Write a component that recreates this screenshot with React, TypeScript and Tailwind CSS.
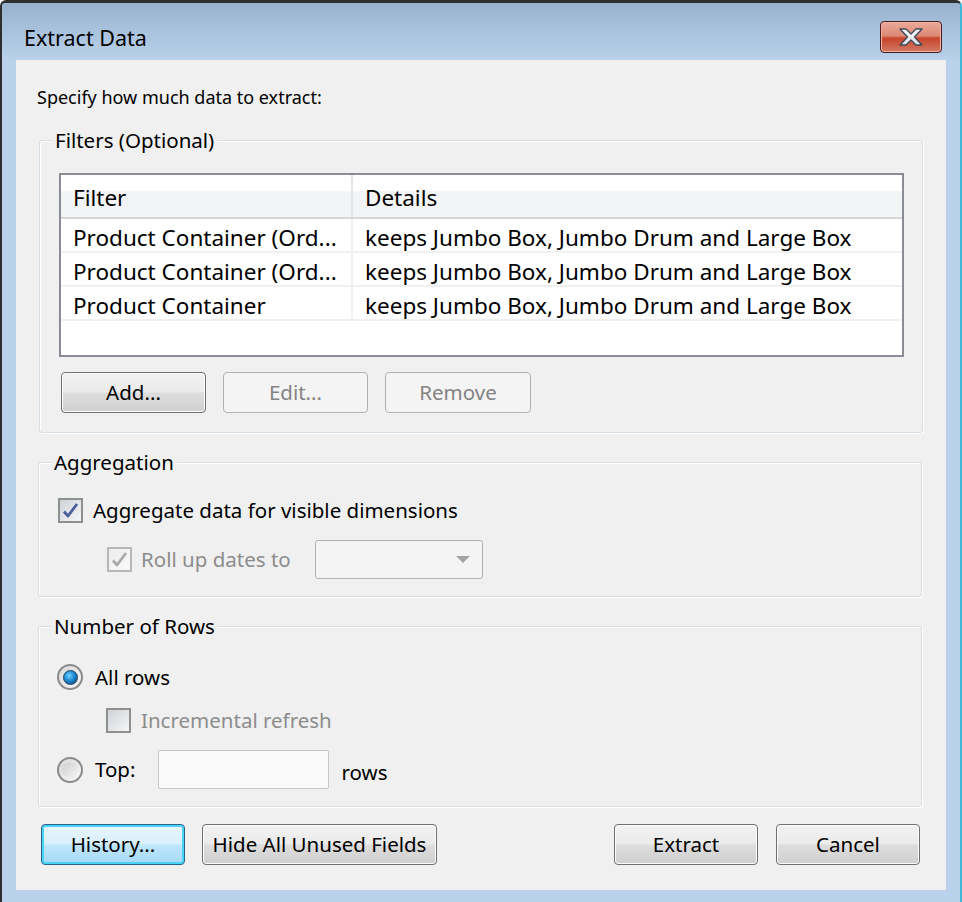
import React from 'react';

const font = { fontFamily: '"Noto Sans", "Open Sans", sans-serif' };

type BtnProps = {
  label: string;
  width: string;
  disabled?: boolean;
  focused?: boolean;
};

// Win7 style push button
const Button: React.FC<BtnProps> = ({ label, width, disabled, focused }) => {
  let cls = 'border border-[#707070] bg-[linear-gradient(#f2f2f2_0%,#ebebeb_48%,#dddddd_52%,#cfcfcf_100%)] text-black shadow-[inset_0_0_0_1px_#fbfbfb]';
  if (disabled) cls = 'border border-[#adb2b5] bg-[#f4f4f4] text-[#838383]';
  if (focused) cls = 'border border-[#2c628b] bg-[linear-gradient(#eaf6fd_0%,#d9f0fc_48%,#bee6fd_52%,#a7d9f5_100%)] text-black shadow-[inset_0_0_0_2px_#48d3f8]';
  return (
    <button className={`${width} h-[41px] shrink-0 rounded-[4px] text-[20.5px] leading-none whitespace-nowrap ${cls}`}>
      {label}
    </button>
  );
};

const CheckBox: React.FC<{ checked?: boolean; disabled?: boolean }> = ({ checked, disabled }) => (
  <div
    className={`w-[25px] h-[25px] shrink-0 flex items-center justify-center border-2 ${
      disabled
        ? 'border-[#b7b7b7] bg-[linear-gradient(135deg,#ececec,#fafafa)]'
        : 'border-[#8e8f8f] bg-[linear-gradient(135deg,#cfd3d8,#f6f6f6)]'
    }`}
  >
    {checked && (
      <svg width="17" height="17" viewBox="0 0 17 17">
        <path
          d="M2 9.5 L6 14 L15 2"
          fill="none"
          stroke={disabled ? '#a9a9a9' : '#4a5f9c'}
          strokeWidth="2.8"
          strokeLinejoin="round"
        />
      </svg>
    )}
  </div>
);

const Radio: React.FC<{ checked?: boolean }> = ({ checked }) => (
  <div className="w-[26px] h-[26px] shrink-0 rounded-full border-2 border-[#8b8b8b] bg-[linear-gradient(135deg,#d8d8d8,#f8f8f8)] flex items-center justify-center">
    {checked ? (
      <div className="w-[15px] h-[15px] rounded-full border border-[#1b3f63] bg-[radial-gradient(circle_at_40%_35%,#6fd0ff_0%,#1f8ad2_45%,#0a3d70_100%)]" />
    ) : (
      <div className="w-[16px] h-[16px] rounded-full bg-[linear-gradient(135deg,#cfcfcf,#f4f4f4)]" />
    )}
  </div>
);

const GroupBox: React.FC<{ title: string; height: string; children: React.ReactNode }> = ({ title, height, children }) => (
  <div className={`relative w-[884px] ${height} rounded-[3px] border border-[#d5dfe5] shadow-[1px_1px_0_#ffffff,inset_1px_1px_0_#ffffff]`}>
    <span className="absolute left-[12px] -top-[14px] px-[3px] bg-[#f0f0f0] text-[20.5px] leading-[26px]">{title}</span>
    {children}
  </div>
);

const rows = [
  ['Product Container (Ord...', 'keeps Jumbo Box, Jumbo Drum and Large Box'],
  ['Product Container (Ord...', 'keeps Jumbo Box, Jumbo Drum and Large Box'],
  ['Product Container', 'keeps Jumbo Box, Jumbo Drum and Large Box'],
];

export default function App() {
  return (
    <div style={font} className="w-[962px] h-[902px] flex flex-col bg-[#b9d1ea] border-t-[3px] border-l-2 border-r-2 border-t-[#2e2e2e] border-l-[#2e2e2e] border-r-[#3fb6d6] rounded-t-[6px] text-black overflow-hidden">
      {/* title bar */}
      <div className="h-[57px] shrink-0 flex items-start justify-between pl-[22px] pr-[18px] bg-[linear-gradient(#98b1cc_0%,#a9c2dd_50%,#b9d1ea_100%)]">
        <span className="mt-[20px] text-[21.5px] leading-[30px]">Extract Data</span>
        <div className="mt-[18px] w-[62px] h-[32px] rounded-[4px] border border-[#4a1a1f] bg-[linear-gradient(#eaa99a_0%,#dd8a76_45%,#c8462c_55%,#d27a63_100%)] shadow-[inset_0_0_0_1px_#f0b4a6] flex items-center justify-center">
          <svg width="24" height="18" viewBox="0 0 24 18">
            <defs>
              <linearGradient id="xg" x1="0" y1="0" x2="0" y2="1">
                <stop offset="0" stopColor="#ffffff" />
                <stop offset="1" stopColor="#d9dde3" />
              </linearGradient>
            </defs>
            <polygon
              points="1,1 7,1 12,6 17,1 23,1 15.5,9 23,17 17,17 12,12 7,17 1,17 8.5,9"
              fill="url(#xg)"
              stroke="#3f4b5e"
              strokeWidth="1.4"
              strokeLinejoin="round"
            />
          </svg>
        </div>
      </div>

      {/* client area */}
      <div className="ml-[14px] w-[930px] h-[830px] shrink-0 bg-[#f0f0f0] flex flex-col">
        <div className="pl-[21px] pt-[24px] h-[49px] text-[18px] leading-[26px]">Specify how much data to extract:</div>

        <div className="ml-[23px] mt-[31px]">
          <GroupBox title="Filters (Optional)" height="h-[293px]">
            <div className="ml-[19px] mt-[32px] w-[845px] h-[184px] border-2 border-[#8a8d94] bg-white flex flex-col">
              <div className="h-[44px] shrink-0 flex border-b-2 border-[#d5d5d5] bg-[linear-gradient(#ffffff_0%,#ffffff_38%,#f3f4f6_38%,#f3f4f6_100%)] text-[22.5px] leading-none">
                <div className="w-[292px] shrink-0 pl-[12px] pt-[4px] flex items-center border-r-2 border-[#e3e5e8]">Filter</div>
                <div className="flex-1 pl-[12px] pt-[4px] flex items-center">Details</div>
              </div>
              {rows.map((r, i) => (
                <div key={i} className="h-[34px] shrink-0 flex border-b-2 border-[#f0f0f0] text-[22.5px] leading-none">
                  <div className="w-[292px] shrink-0 pl-[12px] pt-[7px] flex items-center border-r-2 border-[#f0f0f0] whitespace-nowrap">{r[0]}</div>
                  <div className="flex-1 pl-[12px] pt-[7px] flex items-center whitespace-nowrap">{r[1]}</div>
                </div>
              ))}
            </div>
            <div className="ml-[21px] mt-[15px] flex gap-[17px]">
              <Button label="Add..." width="w-[145px]" />
              <Button label="Edit..." width="w-[145px]" disabled />
              <Button label="Remove" width="w-[146px]" disabled />
            </div>
          </GroupBox>
        </div>

        <div className="ml-[22px] mt-[29px]">
          <GroupBox title="Aggregation" height="h-[135px]">
            <div className="ml-[19px] mt-[35px] h-[25px] flex items-center gap-[10px] text-[20.5px] leading-[25px]">
              <CheckBox checked />
              <span>Aggregate data for visible dimensions</span>
            </div>
            <div className="ml-[68px] mt-[17px] h-[39px] flex items-center text-[20.5px] leading-[25px] text-[#8c8c8c]">
              <CheckBox checked disabled />
              <span className="ml-[9px]">Roll up dates to</span>
              <div className="ml-[24px] w-[168px] h-[39px] rounded-[3px] border border-[#adb2b5] bg-[#f4f4f4] flex items-center justify-end pr-[12px]">
                <svg width="14" height="8" viewBox="0 0 14 8">
                  <polygon points="0,0 14,0 7,7" fill="#a3a3a3" />
                </svg>
              </div>
            </div>
          </GroupBox>
        </div>

        <div className="ml-[22px] mt-[29px]">
          <GroupBox title="Number of Rows" height="h-[181px]">
            <div className="ml-[18px] mt-[37px] h-[26px] flex items-center gap-[12px] text-[20.5px] leading-[25px]">
              <Radio checked />
              <span>All rows</span>
            </div>
            <div className="ml-[67px] mt-[18px] h-[25px] flex items-center gap-[10px] text-[20.5px] leading-[25px] text-[#8c8c8c]">
              <CheckBox />
              <span>Incremental refresh</span>
            </div>
            <div className="ml-[18px] mt-[17px] h-[39px] flex items-center text-[20.5px] leading-[25px]">
              <Radio />
              <span className="ml-[12px]">Top:</span>
              <div className="ml-[23px] w-[171px] h-[39px] rounded-[2px] border border-[#c3c6cc] bg-[#fafafa]" />
              <span className="ml-[12px] mt-[5px]">rows</span>
            </div>
          </GroupBox>
        </div>

        <div className="mt-[17px] pl-[25px] pr-[26px] flex items-center">
          <Button label="History..." width="w-[144px]" focused />
          <div className="ml-[17px]">
            <Button label="Hide All Unused Fields" width="w-[235px]" />
          </div>
          <div className="ml-auto flex gap-[18px]">
            <Button label="Extract" width="w-[144px]" />
            <Button label="Cancel" width="w-[144px]" />
          </div>
        </div>
      </div>
    </div>
  );
}
